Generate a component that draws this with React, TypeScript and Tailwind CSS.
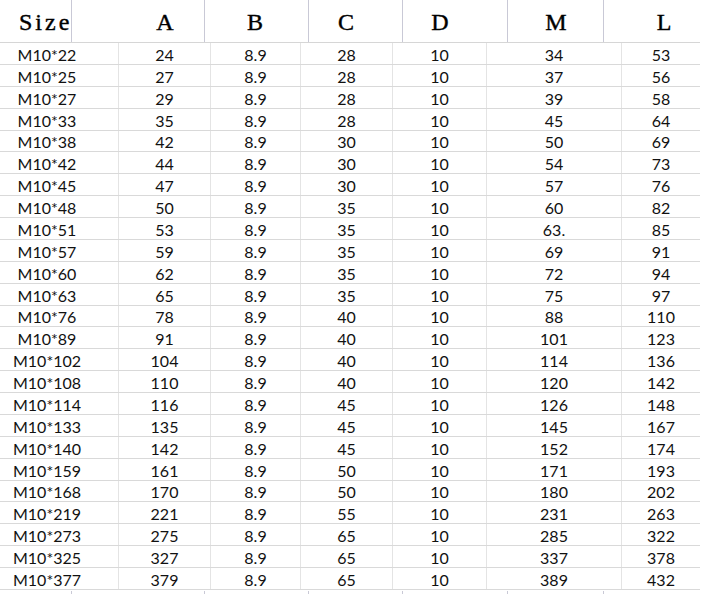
import React from "react";

const rows: string[][] = [
  ["M10*22", "24", "8.9", "28", "10", "34", "53"],
  ["M10*25", "27", "8.9", "28", "10", "37", "56"],
  ["M10*27", "29", "8.9", "28", "10", "39", "58"],
  ["M10*33", "35", "8.9", "28", "10", "45", "64"],
  ["M10*38", "42", "8.9", "30", "10", "50", "69"],
  ["M10*42", "44", "8.9", "30", "10", "54", "73"],
  ["M10*45", "47", "8.9", "30", "10", "57", "76"],
  ["M10*48", "50", "8.9", "35", "10", "60", "82"],
  ["M10*51", "53", "8.9", "35", "10", "63.", "85"],
  ["M10*57", "59", "8.9", "35", "10", "69", "91"],
  ["M10*60", "62", "8.9", "35", "10", "72", "94"],
  ["M10*63", "65", "8.9", "35", "10", "75", "97"],
  ["M10*76", "78", "8.9", "40", "10", "88", "110"],
  ["M10*89", "91", "8.9", "40", "10", "101", "123"],
  ["M10*102", "104", "8.9", "40", "10", "114", "136"],
  ["M10*108", "110", "8.9", "40", "10", "120", "142"],
  ["M10*114", "116", "8.9", "45", "10", "126", "148"],
  ["M10*133", "135", "8.9", "45", "10", "145", "167"],
  ["M10*140", "142", "8.9", "45", "10", "152", "174"],
  ["M10*159", "161", "8.9", "50", "10", "171", "193"],
  ["M10*168", "170", "8.9", "50", "10", "180", "202"],
  ["M10*219", "221", "8.9", "55", "10", "231", "263"],
  ["M10*273", "275", "8.9", "65", "10", "285", "322"],
  ["M10*325", "327", "8.9", "65", "10", "337", "378"],
  ["M10*377", "379", "8.9", "65", "10", "389", "432"],
];

const colCls = [
  "w-[118px] pr-[24px]",
  "w-[92px] border-l border-[#e4e4e4]",
  "w-[90px] border-l border-[#e4e4e4]",
  "w-[92px] border-l border-[#e4e4e4]",
  "w-[94px] border-l border-[#e4e4e4]",
  "w-[135px] border-l border-[#e4e4e4]",
  "w-[79px] border-l border-[#e4e4e4]",
];

function HeaderSegments({ tall }: { tall: boolean }) {
  const segs: { w: string; label: string; ml: string; extra?: string }[] = [
    { w: "w-[72px]", label: "Size", ml: "ml-[19px]", extra: "tracking-[3px]" },
    { w: "w-[133px]", label: "A", ml: "ml-[73px]" },
    { w: "w-[104px]", label: "B", ml: "ml-[30px]" },
    { w: "w-[94px]", label: "C", ml: "ml-[17px]" },
    { w: "w-[105px]", label: "D", ml: "ml-[17px]" },
    { w: "w-[96px]", label: "M", ml: "ml-[28px]" },
    { w: "w-[100px]", label: "L", ml: "ml-[40px]" },
  ];
  return (
    <div className={tall ? "flex h-[42px]" : "flex h-[3px]"}>
      {segs.map((s, i) => (
        <div
          key={i}
          className={`${s.w} shrink-0 h-full flex items-center ${i < segs.length - 1 ? "border-r border-[#c9c9d6]" : ""}`}
        >
          {tall && (
            <span
              className={`${s.ml} ${i === 0 ? "" : "w-[40px] text-center"} ${s.extra ?? ""} text-[24px] leading-none text-black pt-[2px] [-webkit-text-stroke:0.4px_black]`}
              style={{ fontFamily: '"Liberation Serif", "DejaVu Serif", serif' }}
            >
              {s.label}
            </span>
          )}
        </div>
      ))}
    </div>
  );
}

export default function App() {
  return (
    <div className="w-[704px] h-[594px] bg-white overflow-hidden">
      <div className="border-b border-[#d6d6d6] w-[700px]">
        <HeaderSegments tall />
      </div>
      <div
        className="w-[700px] text-[16px] text-[#111111]"
        style={{ fontFamily: 'Lato, "Open Sans", sans-serif' }}
      >
        {rows.map((r, ri) => (
          <div key={ri} className="flex h-[21.88px] border-b border-[#d9d9d9]">
            {r.map((c, ci) => (
              <div
                key={ci}
                className={`${colCls[ci]} shrink-0 h-full flex items-center justify-center pt-[3px]`}
              >
                {c}
              </div>
            ))}
          </div>
        ))}
      </div>
      <div className="pt-[1px]">
        <HeaderSegments tall={false} />
      </div>
    </div>
  );
}
